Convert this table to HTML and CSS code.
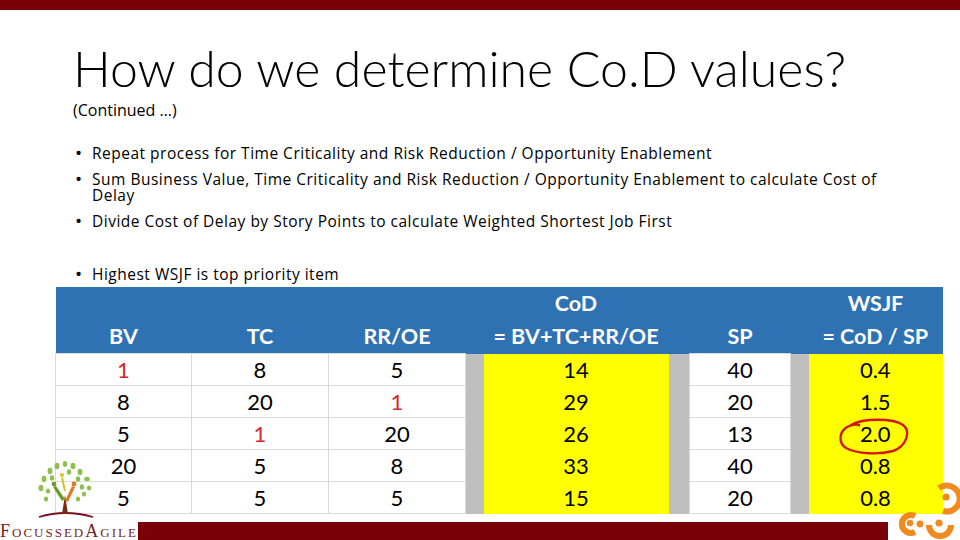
FILE: index.html
```html
<!DOCTYPE html>
<html>
<head>
<meta charset="utf-8">
<link rel="stylesheet" href="styles.css">
</head>
<body>
<div class="topbar"></div>
<header class="head">
  <h1 class="title">How do we determine Co.D values?</h1>
  <p class="sub">(Continued …)</p>
</header>
<ul class="bullets">
  <li><span class="dot">•</span><span>Repeat process for Time Criticality and Risk Reduction / Opportunity Enablement</span></li>
  <li><span class="dot">•</span><span>Sum Business Value, Time Criticality and Risk Reduction / Opportunity Enablement to calculate Cost of<br>Delay</span></li>
  <li><span class="dot">•</span><span>Divide Cost of Delay by Story Points to calculate Weighted Shortest Job First</span></li>
  <li class="later"><span class="dot">•</span><span>Highest WSJF is top priority item</span></li>
</ul>
<div class="tablewrap">
  <table class="wsjf">
    <colgroup>
      <col class="c-bv"><col class="c-tc"><col class="c-rr"><col class="c-g1"><col class="c-cod"><col class="c-g2"><col class="c-sp"><col class="c-g3"><col class="c-ws">
    </colgroup>
    <thead>
      <tr class="hr1"><th colspan="4"></th><th>CoD</th><th colspan="3"></th><th>WSJF</th></tr>
      <tr class="hr2"><th>BV</th><th>TC</th><th>RR/OE</th><th></th><th>= BV+TC+RR/OE</th><th></th><th>SP</th><th></th><th>= CoD / SP</th></tr>
    </thead>
    <tbody>
      <tr><td class="w red">1</td><td class="w">8</td><td class="w">5</td><td class="g"></td><td class="y">14</td><td class="g"></td><td class="w">40</td><td class="g"></td><td class="y">0.4</td></tr>
      <tr><td class="w">8</td><td class="w">20</td><td class="w red">1</td><td class="g"></td><td class="y">29</td><td class="g"></td><td class="w">20</td><td class="g"></td><td class="y">1.5</td></tr>
      <tr><td class="w">5</td><td class="w red">1</td><td class="w">20</td><td class="g"></td><td class="y">26</td><td class="g"></td><td class="w">13</td><td class="g"></td><td class="y">2.0</td></tr>
      <tr><td class="w">20</td><td class="w">5</td><td class="w">8</td><td class="g"></td><td class="y">33</td><td class="g"></td><td class="w">40</td><td class="g"></td><td class="y">0.8</td></tr>
      <tr><td class="w">5</td><td class="w">5</td><td class="w">5</td><td class="g"></td><td class="y">15</td><td class="g"></td><td class="w">20</td><td class="g"></td><td class="y">0.8</td></tr>
    </tbody>
  </table>
  <svg class="ring" width="74" height="40" viewBox="0 0 74 40">
    <path d="M14 9 C26 2 56 2 66 9 C74 15 70 30 56 35 C42 39 20 38 9 32 C1 27 2 16 10 11 C14 9 19 8 22 9" fill="none" stroke="#d0181c" stroke-width="2.4" stroke-linecap="round"/>
  </svg>
</div>
<footer class="foot">
  <span class="brand">FocussedAgile</span>
  <div class="bar"></div>
</footer>
<svg class="tree" width="62" height="62" viewBox="0 0 62 62">
  <path d="M4 56 Q30 48 58 56" fill="none" stroke="#7a1020" stroke-width="1.8"/>
  <path d="M27 53 L30 34 L33 53 Z" fill="#7a2a12"/>
  <path d="M30 38 L21 25 L18 26 L27 40 Z" fill="#6e9a2c"/>
  <path d="M30 40 L37 25 L40 26 L33 41 Z" fill="#e07a20"/>
  <circle cx="19" cy="23" r="2.4" fill="#6e9a2c"/>
  <circle cx="39" cy="23" r="2.4" fill="#e07a20"/>
  <path d="M29 30 L26 17 L28 16 L31 30 Z" fill="#d9c32a"/>
  <circle cx="27" cy="14" r="2" fill="#d9c32a"/>
  <g fill="#8cc04a">
    <ellipse cx="22" cy="5" rx="2.4" ry="3.2"/>
    <ellipse cx="30" cy="3" rx="2.2" ry="3"/>
    <ellipse cx="38" cy="5" rx="2.4" ry="3.2"/>
    <ellipse cx="15" cy="10" rx="2.4" ry="3.2"/>
    <ellipse cx="34" cy="11" rx="2.2" ry="2.8"/>
    <ellipse cx="45" cy="11" rx="2.4" ry="3.2"/>
    <ellipse cx="9" cy="18" rx="2.4" ry="3.2"/>
    <ellipse cx="17" cy="17" rx="2.2" ry="2.8"/>
    <ellipse cx="43" cy="18" rx="2.2" ry="2.8"/>
    <ellipse cx="52" cy="18" rx="2.8" ry="2.2"/>
    <ellipse cx="6" cy="27" rx="2.4" ry="3.2"/>
    <ellipse cx="13" cy="30" rx="2.2" ry="2.6"/>
    <ellipse cx="47" cy="26" rx="2.2" ry="2.8"/>
    <ellipse cx="54" cy="27" rx="2.2" ry="2.6"/>
    <ellipse cx="49" cy="33" rx="2.2" ry="2.6"/>
    <ellipse cx="11" cy="38" rx="2.2" ry="2.6"/>
    <ellipse cx="43" cy="38" rx="2.2" ry="2.6"/>
  </g>
</svg>
<svg class="mark" width="67" height="60" viewBox="0 0 67 60">
  <g fill="none" stroke="#f0891e" stroke-width="6" stroke-linecap="butt">
    <path d="M46 8 A13 13 0 1 1 50 31"/>
    <path d="M22 36 A9 9 0 1 0 22 52"/>
    <path d="M36 45 A11 11 0 0 0 58 45"/>
  </g>
  <g fill="#f0891e">
    <circle cx="53" cy="17" r="3.6"/>
    <circle cx="17" cy="43" r="3.2"/>
    <circle cx="27" cy="44" r="3.4"/>
    <circle cx="46" cy="43" r="3.6"/>
  </g>
</svg>
</body>
</html>
```
FILE: styles.css
```css
body {
  margin: 0;
  width: 960px;
  height: 540px;
  overflow: hidden;
  background: #ffffff;
  font-family: "Open Sans", Lato, sans-serif;
  color: #000;
  position: relative;
  display: flex;
  flex-direction: column;
}
.topbar {
  height: 10px;
  flex: none;
  background: #7b0109;
}
.head {
  padding-left: 73px;
}
.title {
  margin: 30px 0 0;
  font-family: Lato, sans-serif;
  font-weight: 300;
  font-size: 50px;
  line-height: 56px;
  color: #000;
}
.sub {
  margin: 4px 0 0;
  font-size: 16px;
  line-height: 20px;
}
.bullets {
  list-style: none;
  margin: 25px 0 0;
  padding: 0 0 0 75px;
  font-size: 15.5px;
  line-height: 16px;
  letter-spacing: 0.5px;
}
.bullets li {
  display: flex;
  margin-bottom: 10px;
}
.bullets li.later {
  margin-top: 37px;
  margin-bottom: 0;
}
.dot {
  width: 17px;
  flex: none;
  font-size: 19px;
  letter-spacing: 0;
}
.tablewrap {
  position: relative;
  margin: 5px 0 0 55px;
  width: 887px;
}
.wsjf {
  border-collapse: collapse;
  table-layout: fixed;
  width: 887px;
  font-family: Lato, sans-serif;
  font-size: 22px;
  text-align: center;
}
.c-bv { width: 136px; }
.c-tc { width: 137px; }
.c-rr { width: 137px; }
.c-g1 { width: 18px; }
.c-cod { width: 185px; }
.c-g2 { width: 21px; }
.c-sp { width: 101px; }
.c-g3 { width: 18px; }
.c-ws { width: 134px; }
.wsjf th {
  background: #2f72b4;
  color: #ffffff;
  font-weight: 700;
  font-size: 21.5px;
  padding: 0;
  height: 33px;
  line-height: 33px;
  white-space: nowrap;
}
.wsjf td {
  height: 31px;
  padding: 0;
  line-height: 31px;
}
.wsjf td.w {
  background: #fff;
  border: 1px solid #dadada;
}
.wsjf td.g {
  background: #bfbfbf;
}
.wsjf td.y {
  background: #ffff00;
}
.wsjf td.red {
  color: #d8262b;
}
.ring {
  position: absolute;
  left: 782px;
  top: 129px;
}
.foot {
  display: flex;
  flex: none;
  margin-top: auto;
  height: 18px;
}
.brand {
  width: 138px;
  flex: none;
  font-family: "Liberation Serif", serif;
  font-variant: small-caps;
  font-size: 18px;
  line-height: 18px;
  letter-spacing: 2px;
  color: #7a1d1d;
  white-space: nowrap;
  overflow: hidden;
}
.bar {
  width: 750px;
  background: #7b0109;
}
.tree {
  position: absolute;
  left: 35px;
  top: 461px;
}
.mark {
  position: absolute;
  left: 893px;
  top: 480px;
}
```
